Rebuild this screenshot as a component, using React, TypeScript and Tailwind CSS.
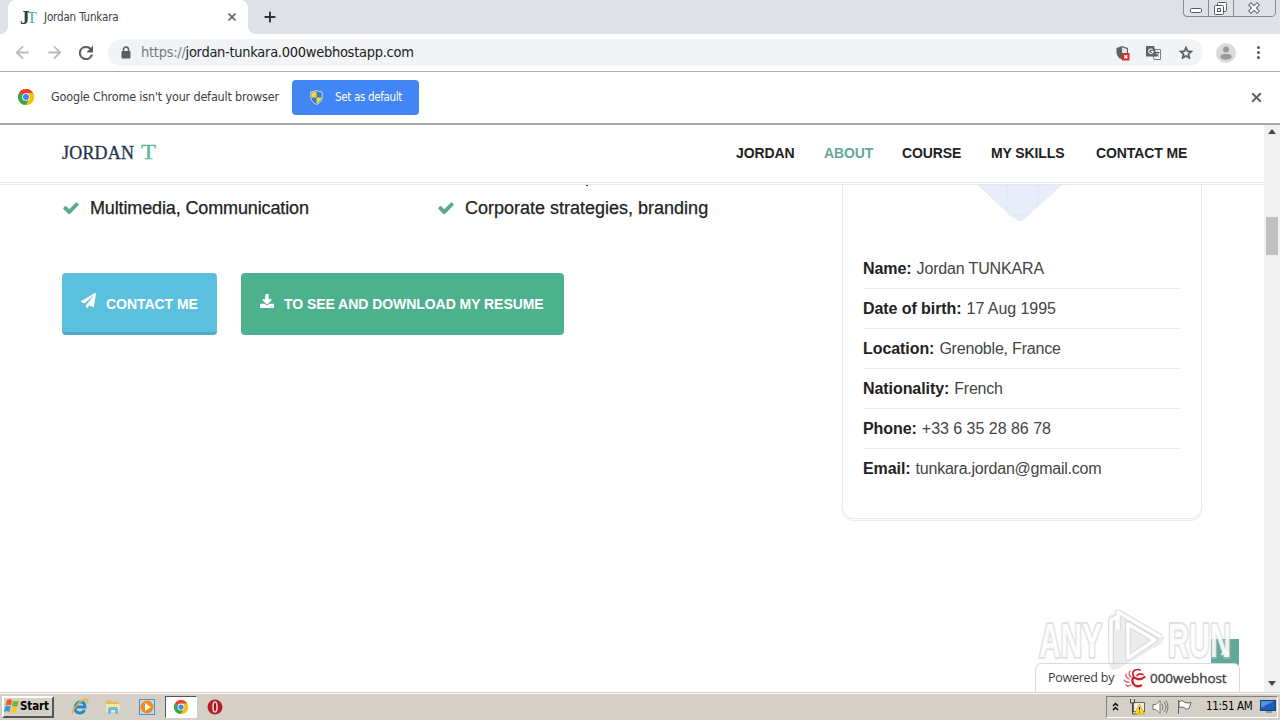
import { FaPaperPlane, FaDownload } from "react-icons/fa";
import { ArrowLeft, ArrowRight, Plus, X } from "lucide-react";

const navItems = [
  { label: "JORDAN", active: false, width: "w-[58px]" },
  { label: "ABOUT", active: true, width: "w-[48px]" },
  { label: "COURSE", active: false, width: "w-[59px]" },
  { label: "MY SKILLS", active: false, width: "w-[75px]" },
  { label: "CONTACT ME", active: false, width: "w-[91px]" },
];

const details = [
  { label: "Name:", value: "Jordan TUNKARA", tracking: "tracking-[-0.15px]" },
  { label: "Date of birth:", value: "17 Aug 1995", tracking: "tracking-[-0.05px]" },
  { label: "Location:", value: "Grenoble, France", tracking: "tracking-[-0.2px]" },
  { label: "Nationality:", value: "French", tracking: "tracking-[-0.25px]" },
  { label: "Phone:", value: "+33 6 35 28 86 78", tracking: "tracking-[-0.02px]" },
  { label: "Email:", value: "tunkara.jordan@gmail.com", tracking: "tracking-[-0.24px]" },
];

const ChromeLogo = ({ className }: { className: string }) => (
  <svg viewBox="0 0 24 24" className={className}>
    <circle cx="12" cy="12" r="12" fill="#fbbc05" />
    <path d="M12 12 L1.6 6 A12 12 0 0 0 12 24 L17.2 15Z" fill="#34a853" />
    <path d="M12 12 L1.6 6 A12 12 0 0 1 22.4 6 L12 6.5Z" fill="#ea4335" />
    <path d="M12 6.5 H22.6 A12 12 0 0 1 12 24 L17 14.5Z" fill="#fbbc05" />
    <circle cx="12" cy="12" r="5.8" fill="#fff" />
    <circle cx="12" cy="12" r="4.5" fill="#4285f4" />
  </svg>
);

const CheckIcon = () => (
  <svg viewBox="0 0 1792 1792" className="mr-[10px] h-[18px] w-[18px] shrink-0" fill="#5fa696">
    <path d="M1671 566q0 40-28 68l-724 724-136 136q-28 28-68 28t-68-28l-136-136-362-362q-28-28-28-68t28-68l136-136q28-28 68-28t68 28l294 295 656-657q28-28 68-28t68 28l136 136q28 28 28 68z" />
  </svg>
);

const TabStrip = () => (
  <div className="flex h-[34px] items-start bg-[#dee1e6]">
    <div className="flex h-full w-2 items-end bg-white">
      <div className="h-full w-full rounded-br-lg bg-[#dee1e6]" />
    </div>
    <div className="flex h-[34px] w-60 items-center rounded-t-lg bg-white pl-3 pr-[10px]">
      <div className="flex h-4 w-4 items-center font-['Liberation_Serif',serif] leading-none">
        <span className="w-[7px] text-[19px] font-bold text-[#2c3e4c]">J</span>
        <span className="mt-[2px] text-[16px] text-[#52ab96]">T</span>
      </div>
      <span className="ml-2 mt-[1px] flex-1 whitespace-nowrap text-[11.5px] tracking-[-0.15px] text-[#3c4043]">
        Jordan Tunkara
      </span>
      <X size={12} strokeWidth={3.4} className="text-[#5f6368]" />
    </div>
    <div className="h-full w-2 bg-white">
      <div className="h-full w-full rounded-bl-lg bg-[#dee1e6]" />
    </div>
    <div className="flex h-full flex-1 items-center pl-[6px]">
      <Plus size={16} strokeWidth={2.8} className="text-[#2f3338]" />
    </div>
    <svg width="93" height="17" className="mr-1" fill="none">
      <path d="M.5 0V13Q.5 16.5 4 16.5H88Q92.5 16.5 92.5 13V0M25.5 0V16.5M50.5 0V16.5" stroke="#858a94" />
      <rect x="7.500" y="8.500" width="11" height="4" rx="1" fill="#fff" stroke="#555a65" />
      <rect x="34.500" y="2.500" width="9" height="9" rx="1" fill="#fff" stroke="#555a65" />
      <rect x="31.500" y="5.500" width="9" height="9" rx="1" fill="#fff" stroke="#555a65" />
      <rect x="34.500" y="8.500" width="3" height="3" stroke="#555a65" />
      <path d="M68 5l6 6M74 5l-6 6" stroke="#555a65" strokeWidth="4.200" strokeLinecap="square" />
      <path d="M68 5l6 6M74 5l-6 6" stroke="#fff" strokeWidth="2.400" strokeLinecap="square" />
    </svg>
  </div>
);

const Toolbar = () => (
  <div className="flex h-[38px] items-center border-b border-[#a9abae] bg-white">
    <div className="flex items-center gap-4 pl-[13px]">
      <ArrowLeft size={19} strokeWidth={2.3} className="text-[#b9bbbe]" />
      <ArrowRight size={19} strokeWidth={2.3} className="-ml-[3px] text-[#b9bbbe]" />
      <svg viewBox="4 4 16 16" className="-ml-[1px] h-[14px] w-[14px]" fill="#56595d">
        <path d="M17.650 6.350A8 8 0 1 0 19.730 14h-2.080A6 6 0 1 1 12 6c1.660 0 3.140.690 4.220 1.780L13 11h7V4z" stroke="#56595d" strokeWidth=".5" />
      </svg>
    </div>
    <div className="ml-[15px] flex h-[27px] w-[1095px] items-center rounded-full bg-[#f1f3f4] pl-[13px] pr-[9px]">
      <svg width="10" height="13" viewBox="0 0 10 13">
        <path d="M2.500 6V3.500a2.500 2.500 0 0 1 5 0V6" fill="none" stroke="#5a5d61" strokeWidth="1.500" />
        <rect x="0.500" y="5" width="9" height="7.500" rx="1" fill="#5a5d61" />
      </svg>
      <div className="ml-[10px] flex-1 whitespace-nowrap text-[14.5px] tracking-[-0.28px] text-[#202124]">
        <span className="text-[#777b80]">https://</span>jordan-tunkara.000webhostapp.com
      </div>
      <div className="flex items-center gap-4">
        <svg width="15" height="16" viewBox="0 0 15 16" className="-mr-[1px]">
          <path d="M6 1L0.500 3v4.500C.5 10.500 3 13.500 6 14.500L12 8V3z" fill="#5f6368" />
          <path d="M6 2.300V8h5V3.900z" fill="#e3e5e8" />
          <rect x="6" y="8" width="7.500" height="7.500" fill="#d93025" />
          <path d="M8.300 10.300l3 3M11.300 10.300l-3 3" stroke="#fff" strokeWidth="1.300" />
        </svg>
        <svg width="15" height="16" viewBox="0 0 15 16">
          <path d="M6 4.500h8.500v10H8z" fill="#f7f8f9" stroke="#777b80" />
          <path d="M0 1h8l3.200 10.500H0z" fill="#5f6368" />
          <path d="M6.600 4.800a2.200 2.200 0 1 0 .5 1.700H5" fill="none" stroke="#fff" strokeWidth="1.100" />
          <path d="M9 7.500h4.500M11.200 6.500v1M12.700 7.500q-.5 2.500-3 4M10 8.500q1 2 3 3" fill="none" stroke="#5f6368" />
        </svg>
        <svg width="16" height="16" viewBox="0 0 24 24" className="ml-[1px]" fill="#53575c">
          <path d="M22 9.240l-7.190-.62L12 2 9.190 8.630 2 9.240l5.460 4.730L5.820 21 12 17.270 18.180 21l-1.630-7.030zM12 15.400l-3.760 2.270 1-4.280-3.320-2.880 4.380-.38L12 6.100l1.710 4.040 4.380.38-3.320 2.880 1 4.280z" stroke="#53575c" />
        </svg>
      </div>
    </div>
    <svg width="20" height="20" viewBox="0 0 20 20" className="ml-[13px]">
      <circle cx="10" cy="10" r="10" fill="#dadbdc" />
      <circle cx="10" cy="6.500" r="3" fill="#98999b" />
      <ellipse cx="10" cy="13.700" rx="5.700" ry="3" fill="#98999b" />
    </svg>
    <div className="ml-[21px] flex flex-col gap-[2px]">
      <div className="h-[3px] w-[3px] rounded-full bg-[#56595d]" />
      <div className="h-[3px] w-[3px] rounded-full bg-[#56595d]" />
      <div className="h-[3px] w-[3px] rounded-full bg-[#56595d]" />
    </div>
  </div>
);

const DefaultBrowserBar = () => (
  <div className="flex h-[53px] items-center border-b-2 border-[#a6a6a6] bg-white pl-[18px] pr-[18px]">
    <ChromeLogo className="-mt-[1px] h-4 w-4" />
    <span className="-mt-[1px] ml-[17px] w-[241px] whitespace-nowrap text-[12.5px] tracking-[-0.18px] text-[#3c4043]">
      Google Chrome isn't your default browser
    </span>
    <button className="flex h-[35px] w-[127px] items-center rounded bg-[#4285f4] pl-[18px] text-white">
      <svg width="13" height="15" viewBox="0 0 13 15">
        <path d="M6.500.5Q4 2 .8 2v5q0 5 5.700 7.500Q12.200 12 12.200 7V2Q9 2 6.500.5z" fill="#3b78c8" stroke="#d5dce2" />
        <path d="M6.500 1.500Q4 2.600 1.500 2.700V7.500h5zM6.500 7.500h5q-.5 4-5 6.200z" fill="#fcd533" />
      </svg>
      <span className="ml-[12px] whitespace-nowrap text-[11.5px] tracking-[-0.33px]">Set as default</span>
    </button>
    <X size={15} strokeWidth={3} className="-mr-[2px] -mt-[1px] ml-auto text-[#606366]" />
  </div>
);

const SiteHeader = () => (
  <header className="flex h-[60px] shrink-0 flex-col bg-white">
    <div className="flex flex-1 items-center justify-between border-b border-[#e7e7e7] pl-[62px] pr-[77px]">
      <div className="flex items-baseline whitespace-nowrap font-['Liberation_Serif',serif] text-[18px] text-[#253449]">
        <span className="w-[79px] tracking-[0.2px] [-webkit-text-stroke:0.3px_#253449]">JORDAN</span>
        <svg width="16" height="15" className="overflow-visible">
          <text x="0" y="15" textLength="15" lengthAdjust="spacingAndGlyphs" fontSize="20" fill="#5bb99b" stroke="#5bb99b" strokeWidth=".3">T</text>
        </svg>
      </div>
      <nav className="flex gap-[30px] text-[14px] font-bold tracking-[-0.1px] text-[#222]">
        {navItems.map((item) => (
          <a key={item.label} className={`${item.width} whitespace-nowrap ${item.active ? "text-[#65a899]" : ""}`}>
            {item.label}
          </a>
        ))}
      </nav>
    </div>
    <div className="h-[2px] border-b border-[#e7e7e7]" />
  </header>
);

const InfoCard = () => (
  <aside className="flex h-[334px] w-[360px] flex-col rounded-b-xl border border-t-0 border-[#e9e9e9] px-5 shadow-[0_1px_0_#fff,0_2px_0_#ebebeb]">
    <svg width="84" height="37" viewBox="0 0 84 37" className="ml-[115px] shrink-0">
      <path d="M0 0H84L48 33Q42 39 36 33z" fill="#e8edf9" />
      <path d="M29 0V26M2 1l32 31M60 0V20M35 30h14" stroke="#dfe6f4" fill="none" />
    </svg>
    <ul className="mt-[27px] w-[317px] text-[16px] text-[#222]">
      {details.map((item) => (
        <li key={item.label} className="flex h-10 items-center gap-[5px] whitespace-nowrap border-b border-[#e9e9e9] last:border-b-0">
          <b className="tracking-[-0.07px]">{item.label}</b>
          <span className={`text-[#444] ${item.tracking}`}>{item.value}</span>
        </li>
      ))}
    </ul>
  </aside>
);

const AboutSection = () => (
  <main className="flex flex-1 items-start justify-between pl-[62px] pr-[62px]">
    <section className="w-[740px]">
      <div className="h-[9px] pl-[524px]">
        <div className="h-[1px] w-[2px] bg-[#333]" />
      </div>
      <div className="flex text-[18px] text-[#222] [-webkit-text-stroke:0.25px_#222]">
        <div className="flex h-7 w-[375px] items-center tracking-[-0.13px]">
          <CheckIcon />
          Multimedia, Communication
        </div>
        <div className="flex h-7 items-center">
          <CheckIcon />
          Corporate strategies, branding
        </div>
      </div>
      <div className="mt-[51px] flex gap-6 text-[14px] font-bold tracking-[-0.05px] text-white">
        <button className="flex h-[62px] w-[155px] items-center whitespace-nowrap rounded border-b-[3px] border-[#4fa9c9] bg-[#5bc0de] pl-[19px] pt-[3px]">
          <FaPaperPlane size={15} className="mb-[7px] mr-[10px]" />
          CONTACT ME
        </button>
        <button className="flex h-[62px] w-[323px] items-center whitespace-nowrap rounded bg-[#4eb18d] pl-[19px]">
          <FaDownload size={14} className="mb-[7px] mr-[10px]" />
          TO SEE AND DOWNLOAD MY RESUME
        </button>
      </div>
    </section>
    <InfoCard />
  </main>
);

const ScrollBar = () => (
  <div className="flex w-4 flex-col items-center bg-[#f1f1f1] pb-[6px] pt-[4px]">
    <div className="h-0 w-0 border-x-4 border-b-[5px] border-x-transparent border-b-[#4b4b4b]" />
    <div className="mt-[83px] h-[38px] w-3 bg-[#c1c1c1]" />
    <div className="mt-auto h-0 w-0 border-x-4 border-t-[5px] border-x-transparent border-t-[#4b4b4b]" />
  </div>
);

// badges pinned to the bottom right corner, over the page
const FloatingBadges = () => (
  <>
    <div className="absolute left-[1211px] top-[639px] flex h-[27px] w-7 items-center justify-center bg-[#5fa99c]" />
    <div className="absolute left-[1035px] top-[663px] flex h-[29px] w-[205px] items-center rounded-t-md border border-b-0 border-[#d5dcda] bg-white pl-[12px] font-['Open_Sans',sans-serif] text-[12.5px] text-[#3b3b3b]">
      <span className="w-[74px] whitespace-nowrap tracking-[-0.25px]">Powered by</span>
      <svg width="24" height="22" viewBox="0 0 24 22" fill="none" strokeLinecap="round">
        <path d="M22.500 10Q18 14 13 11M11 11Q9 15 13 18.500Q16 20 19 18.500" stroke="#d4202c" strokeWidth="2.300" />
        <path d="M12 10Q9 5 13 3Q16 2 18 3M15 8.500Q17 6 21 7.500" stroke="#d4202c" strokeWidth="1.700" />
        <path d="M9 10Q6 7 8 4M7 12Q3 10 4 7M7 15Q4 16 2 13M9 18Q6 20 4 18" stroke="#dd5560" strokeWidth="1.300" />
      </svg>
      <span className="ml-[4px] whitespace-nowrap text-[13.5px] tracking-[-0.05px] [-webkit-text-stroke:0.3px_#3b3b3b]">000webhost</span>
    </div>
    <svg width="230" height="92" className="absolute left-[1034px] top-[600px] overflow-visible">
      <g
        fill="#fff"
        fillOpacity=".9"
        stroke="#c4c4c4"
        strokeOpacity=".5"
        strokeWidth="4"
        strokeLinejoin="round"
        paintOrder="stroke"
        fontFamily="Liberation Sans"
        fontWeight="bold"
        fontSize="48"
      >
        <text x="5" y="57" textLength="63" lengthAdjust="spacingAndGlyphs">ANY</text>
        <text x="134" y="57" textLength="63" lengthAdjust="spacingAndGlyphs">RUN</text>
      </g>
      <g fill="none" strokeLinejoin="round">
        <path d="M74 20Q74 14 80 14Q82 8 88 11L127 34Q133 39 127 44L84 69Q75 72 75 63z" fill="#c4c4c4" fillOpacity=".32" />
        <path d="M77 63V20L83 17V30M84 30V12L127 37M94 24v34l27-18z" stroke="#aaa" strokeOpacity=".25" strokeWidth="6" />
        <path d="M77 63V20L83 17V30M84 30V12L127 37M94 24v34l27-18z" stroke="#fff" strokeOpacity=".95" strokeWidth="3.500" />
        <path d="M187 55l4-4 4 4" stroke="#fff" strokeWidth="1.500" />
      </g>
    </svg>
  </>
);

const Taskbar = () => (
  <div className="flex h-[28px] items-center border-t border-[#d4d0c8] bg-[#d4d0c8] pl-[2px] pr-[2px] shadow-[inset_0_1px_0_#fff]">
    <button className="flex h-[22px] w-[52px] items-center border-2 border-b-[#555] border-l-white border-r-[#555] border-t-white text-[11.5px] font-bold text-black">
      <svg width="16" height="15" viewBox="0 0 16 15" className="shrink-0">
        <path d="M3 1Q6-.5 8 1.300L7 6.500Q4.500 5 1.500 6.500z" fill="#ef5a28" />
        <path d="M9 2Q12 3 15 1.500L13.500 7Q11 8 8 7z" fill="#71b72b" />
        <path d="M1.300 7.500Q4 6 6.700 7.500L5.400 13Q3 11.500 0 13z" fill="#369bdc" />
        <path d="M7.700 8Q10 9 13.200 8L11.800 13.500Q9 15 6.400 13.300z" fill="#ffc52e" />
      </svg>
      <span className="mt-[1px] tracking-[-0.1px]">Start</span>
    </button>
    <div className="ml-[17px] flex items-center">
      <svg width="18" height="18" viewBox="0 0 18 18" fill="none">
        <path d="M4 9h10Q14 4 9.500 4T4 10q0 5 5 5 3 0 4.500-3" stroke="#218ad0" strokeWidth="2.800" />
        <path d="M2 16Q0 14 5 8T15 1q3 0 1 4" stroke="#e5b52e" strokeWidth="1.500" />
      </svg>
      <svg width="18" height="18" viewBox="0 0 18 18" className="ml-[15px]">
        <path d="M2 3l5-1 1 2h7v10H2z" fill="#e7bb55" />
        <path d="M2 6h14l-1 8H2z" fill="#f8e7a0" />
        <path d="M4 16v-5q0-2 2-2h6q2 0 2 2v5h-3v-4H7v4z" fill="#65bddf" />
      </svg>
      <svg width="18" height="18" viewBox="0 0 18 18" className="ml-[16px]">
        <rect x="1.500" y="1.500" width="15" height="15" fill="#b8dff6" stroke="#4c8fc2" />
        <circle cx="9" cy="9" r="6.500" fill="#f28a16" />
        <path d="M7 5l6 4-6 4z" fill="#fff" />
      </svg>
      <div className="ml-[9px] flex h-[22px] w-[32px] items-center justify-center border border-b-white border-l-[#555] border-r-white border-t-[#555] bg-white">
        <ChromeLogo className="h-[14px] w-[14px]" />
      </div>
      <svg width="16" height="16" viewBox="0 0 16 16" className="ml-[10px]">
        <circle cx="8" cy="8" r="7.500" fill="#b51f24" />
        <ellipse cx="8" cy="8" rx="2" ry="5" fill="#a01319" stroke="#f3dada" strokeWidth="1.500" />
      </svg>
    </div>
    <div className="ml-auto flex h-[22px] w-[172px] items-center border border-b-white border-l-[#808080] border-r-white border-t-[#808080] pl-[5px] text-black">
      <svg width="7" height="9" viewBox="0 0 7 9" fill="none" stroke="#000" strokeWidth="1.400">
        <path d="M1 4l2.500-2.500L6 4M1 8l2.500-2.500L6 8" />
      </svg>
      <svg width="16" height="16" viewBox="0 0 16 16" className="ml-[10px]">
        <rect x="4.500" y="3.500" width="11" height="9" fill="#eee" stroke="#666" />
        <path d="M1.500 0v4h4V0M3.500 4v11h5" stroke="#444" fill="none" />
        <path d="M10.500 5l5 10h-10z" fill="#ffdc26" stroke="#ab8300" strokeWidth=".5" />
        <path d="M10.500 8v3M10.500 12.500v1" stroke="#222" />
      </svg>
      <svg width="17" height="16" viewBox="0 0 17 16" className="ml-[7px]" fill="none" stroke="#777">
        <path d="M1 5.500h3l4-4v13l-4-4H1z" fill="#fff" />
        <path d="M10 5q2 3 0 6M12 3q4 5 0 10M14 1.500q4 6.500 0 13" />
      </svg>
      <svg width="17" height="16" viewBox="0 0 17 16" className="ml-[7px]" fill="#fff" stroke="#666">
        <path d="M2.500 1v14M3 2.500q4-2 6 1 3 1 6 0l-2 6q-3 2-5-1-3-1-5 0z" />
      </svg>
      <span className="ml-[13px] mt-[1px] w-[49px] whitespace-nowrap text-[11.5px] tracking-[-0.33px]">11:51 AM</span>
      <svg width="16" height="13" viewBox="0 0 16 13" className="ml-[5px]">
        <rect x=".5" y=".5" width="15" height="10" fill="#1e5cbb" stroke="#173e7c" />
        <path d="M1 1h13L1 8z" fill="#4f94df" />
        <path d="M6 12h6" stroke="#555" />
      </svg>
    </div>
  </div>
);

export default function App() {
  return (
    <div className="relative flex h-[720px] w-[1280px] flex-col overflow-hidden bg-white font-['DejaVu_Sans_Condensed','DejaVu_Sans',sans-serif]">
      <TabStrip />
      <Toolbar />
      <DefaultBrowserBar />
      <div className="flex h-[567px]">
        <div className="flex w-[1264px] flex-col font-['Liberation_Sans',sans-serif]">
          <SiteHeader />
          <AboutSection />
        </div>
        <ScrollBar />
      </div>
      <Taskbar />
      <FloatingBadges />
    </div>
  );
}
